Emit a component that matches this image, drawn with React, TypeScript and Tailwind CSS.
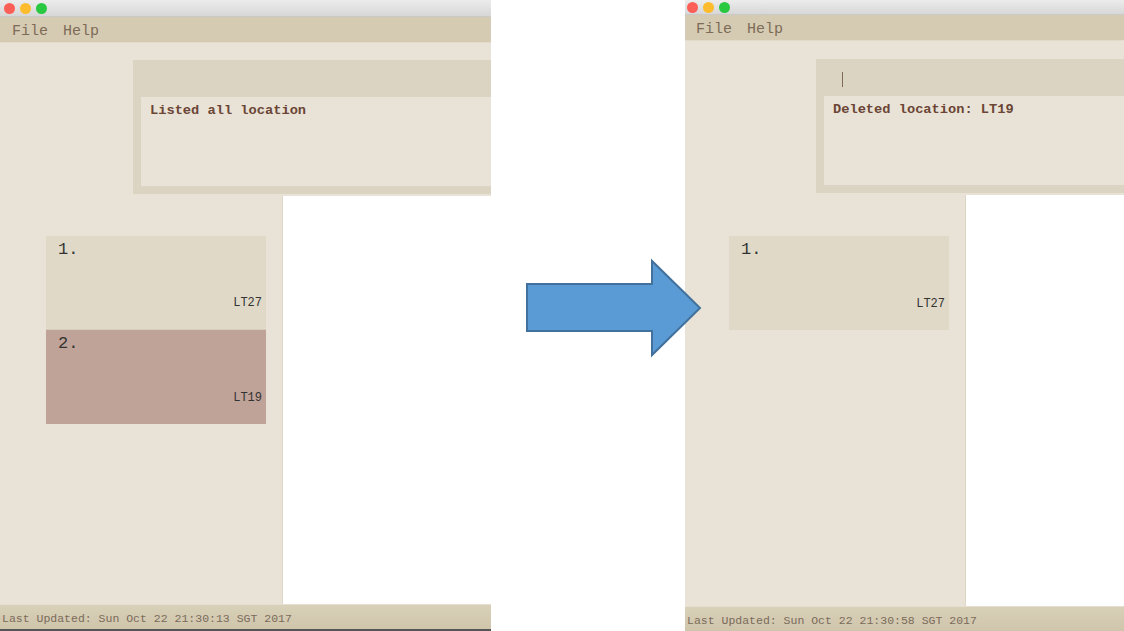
import React from 'react';

type Card = { n: number; code: string; selected?: boolean };

type WindowProps = {
  width: string;
  titleH: string;
  gapH: string;
  panelLeft: string;
  listW: string;
  cardLeft: string;
  cardTop: string;
  menuPl: string;
  dots: string;
  message: string;
  cursor?: boolean;
  cards: Card[];
  status: string;
  bottomLine?: boolean;
};

const mono = "font-['Liberation_Mono','Courier_New',monospace]";

function TrafficLights({ className }: { className: string }) {
  return (
    <div className={`flex items-center gap-[5px] ${className}`}>
      <span className="block w-[11px] h-[11px] rounded-full bg-[#fc5f57]" />
      <span className="block w-[11px] h-[11px] rounded-full bg-[#fdbc2e]" />
      <span className="block w-[11px] h-[11px] rounded-full bg-[#28c840]" />
    </div>
  );
}

function AppWindow(p: WindowProps) {
  return (
    <div className={`${p.width} h-[631px] flex flex-col bg-[#e9e3d7] overflow-hidden ${mono}`}>
      {/* title bar */}
      <div className={`${p.titleH} shrink-0 flex items-center bg-gradient-to-b from-[#ececec] to-[#d7d7d7] border-b border-[#c9c9c9]`}>
        <TrafficLights className={p.dots} />
      </div>
      {/* menu */}
      <div className={`h-[26px] shrink-0 flex items-center gap-[15px] ${p.menuPl} pt-[5px] bg-[#d5cbb2] border-b border-[#e2dbc9] text-[15px] leading-[18px] text-[#7d6b58]`}>
        <span>File</span>
        <span>Help</span>
      </div>
      <div className={`${p.gapH} shrink-0`} />
      {/* command + result */}
      <div className={`h-[134px] shrink-0 ${p.panelLeft} flex flex-col bg-[#dcd4c2] pl-[8px] pb-[8px]`}>
        <div className="h-[37px] shrink-0 flex items-center pl-[18px]">
          {p.cursor && <span className="block w-px h-[15px] bg-[#7d6b58] mt-[4px]" />}
        </div>
        <div className="flex-1 bg-[#e9e3d7] pl-[9px] pt-[6px] text-[13.7px] leading-[16px] font-bold text-[#6b4535]">
          {p.message}
        </div>
      </div>
      <div className="h-[2px] shrink-0" />
      {/* list + detail */}
      <div className="flex-1 flex min-h-0">
        <div className={`${p.listW} shrink-0 ${p.cardLeft} ${p.cardTop} border-r border-[#ddd6c6]`}>
          <div className="w-[220px] flex flex-col">
            {p.cards.map((c, i) => (
              <div
                key={c.code}
                className={`h-[94px] flex flex-col justify-between pl-[12px] pr-[4px] pt-[3px] pb-[19px] text-[#333] ${
                  c.selected ? 'bg-[#bfa298]' : 'bg-[#e0d9c8]'
                } ${i < p.cards.length - 1 ? 'border-b border-[#d8ccba]' : ''}`}
              >
                <span className="text-[17px] leading-[22px]">{c.n}.</span>
                <span className="self-end text-[12px] leading-[14px]">{c.code}</span>
              </div>
            ))}
          </div>
        </div>
        <div className="flex-1 bg-white" />
      </div>
      {/* status bar */}
      <div className="h-[25px] shrink-0 flex items-center pl-[2px] pt-[3px] bg-gradient-to-b from-[#d9d0b9] to-[#cfc5ab] text-[11.5px] leading-[14px] text-[#7a6a5a] border-t border-[#e6dfcf]">
        {p.status}
      </div>
      {p.bottomLine && <div className="h-[2px] shrink-0 bg-[#555]" />}
    </div>
  );
}

export default function App() {
  return (
    <div className="w-[1124px] h-[631px] flex bg-white overflow-hidden">
      <AppWindow
        width="w-[491px]"
        titleH="h-[17px]"
        gapH="h-[17px]"
        panelLeft="ml-[133px]"
        listW="w-[283px]"
        cardLeft="pl-[46px]"
        cardTop="pt-[40px]"
        menuPl="pl-[12px]"
        dots="pl-[4px]"
        message="Listed all location"
        cards={[
          { n: 1, code: 'LT27' },
          { n: 2, code: 'LT19', selected: true },
        ]}
        status="Last Updated: Sun Oct 22 21:30:13 SGT 2017"
        bottomLine
      />
      {/* arrow between the two screenshots */}
      <div className="w-[194px] shrink-0 relative">
        <svg
          className="absolute left-[30px] top-[255px] z-10 overflow-visible"
          width="182"
          height="106"
          viewBox="0 0 182 106"
        >
          <polygon
            points="6,29 131,29 131,6 179,53 131,100 131,76 6,76"
            fill="#5b9bd5"
            stroke="#41719c"
            strokeWidth="2"
            strokeLinejoin="miter"
          />
        </svg>
      </div>
      <AppWindow
        width="w-[439px]"
        titleH="h-[15px]"
        gapH="h-[18px]"
        panelLeft="ml-[131px]"
        listW="w-[281px]"
        cardLeft="pl-[44px]"
        cardTop="pt-[41px]"
        menuPl="pl-[11px]"
        dots="pl-[2px]"
        message="Deleted location: LT19"
        cursor
        cards={[{ n: 1, code: 'LT27' }]}
        status="Last Updated: Sun Oct 22 21:30:58 SGT 2017"
      />
    </div>
  );
}
